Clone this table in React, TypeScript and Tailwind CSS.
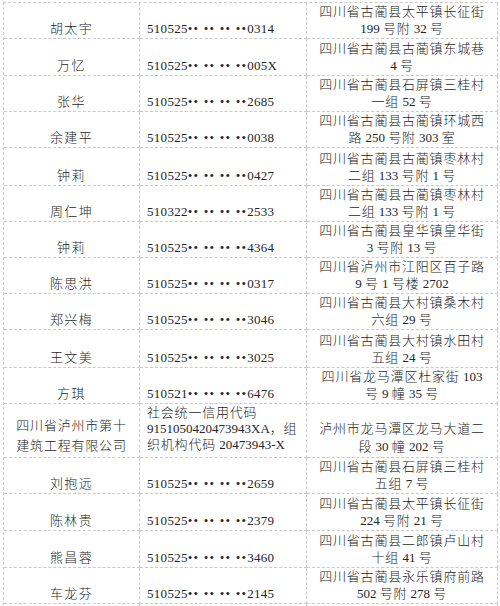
import React from 'react';

type Row = { h: number; name: string; pre: string; tail: string; addr: [string, string] };

const rows: Row[] = [
  { h: 36, name: '胡太宇', pre: '510525', tail: '0314', addr: ['四川省古蔺县太平镇长征街', '199 号附 32 号'] },
  { h: 37, name: '万忆', pre: '510525', tail: '005X', addr: ['四川省古蔺县古蔺镇东城巷', '4 号'] },
  { h: 36, name: '张华', pre: '510525', tail: '2685', addr: ['四川省古蔺县石屏镇三桂村', '一组 52 号'] },
  { h: 36, name: '余建平', pre: '510525', tail: '0038', addr: ['四川省古蔺县古蔺镇环城西', '路 250 号附 303 室'] },
  { h: 38, name: '钟莉', pre: '510525', tail: '0427', addr: ['四川省古蔺县古蔺镇枣林村', '二组 133 号附 1 号'] },
  { h: 35, name: '周仁坤', pre: '510322', tail: '2533', addr: ['四川省古蔺县古蔺镇枣林村', '二组 133 号附 1 号'] },
  { h: 37, name: '钟莉', pre: '510525', tail: '4364', addr: ['四川省古蔺县皇华镇皇华街', '3 号附 13 号'] },
  { h: 36, name: '陈思洪', pre: '510525', tail: '0317', addr: ['四川省泸州市江阳区百子路', '9 号 1 号楼 2702'] },
  { h: 36, name: '郑兴梅', pre: '510525', tail: '3046', addr: ['四川省古蔺县大村镇桑木村', '六组 29 号'] },
  { h: 38, name: '王文美', pre: '510525', tail: '3025', addr: ['四川省古蔺县大村镇水田村', '五组 24 号'] },
  { h: 35, name: '方琪', pre: '510521', tail: '6476', addr: ['四川省龙马潭区杜家街 103', '号 9 幢 35 号'] },
];

const rows2: Row[] = [
  { h: 36, name: '刘抱远', pre: '510525', tail: '2659', addr: ['四川省古蔺县石屏镇三桂村', '五组 7 号'] },
  { h: 37, name: '陈林贵', pre: '510525', tail: '2379', addr: ['四川省古蔺县太平镇长征街', '224 号附 21 号'] },
  { h: 37, name: '熊昌蓉', pre: '510525', tail: '3460', addr: ['四川省古蔺县二郎镇卢山村', '十组 41 号'] },
  { h: 36, name: '车龙芬', pre: '510525', tail: '2145', addr: ['四川省古蔺县永乐镇府前路', '502 号附 278 号'] },
];

// put letter spacing on the chinese runs only, digits stay tight
function T({ s }: { s: string }) {
  const parts = s.split(/([\u4e00-\u9fff，]+)/);
  return (
    <>
      {parts.map((p, i) =>
        /[\u4e00-\u9fff，]/.test(p) ? (
          <span key={i} className="tracking-[0.8px]">{p}</span>
        ) : (
          <span key={i}>{p}</span>
        )
      )}
    </>
  );
}

const cell = 'border-r border-b border-dashed border-[#cacaca]';

function IdText({ pre, tail }: { pre: string; tail: string }) {
  return (
    <span className="tracking-[0.3px]">
      {pre}
      <span className="tracking-[1.2px]">•• •• •• ••</span>
      {tail}
    </span>
  );
}

function PersonRow({ r }: { r: Row }) {
  return (
    <div className="grid grid-cols-[136px_167px_191px]" style={{ height: r.h }}>
      <div className={`${cell} flex items-end justify-center pb-[1px]`}>
        <span className="tracking-[1.4px]">{r.name}</span>
      </div>
      <div className={`${cell} flex items-end pl-[7px] pb-[1px]`}>
        <IdText pre={r.pre} tail={r.tail} />
      </div>
      <div className={`${cell} flex flex-col items-center justify-end pb-[1px]`}>
        <div><T s={r.addr[0]} /></div>
        <div><T s={r.addr[1]} /></div>
      </div>
    </div>
  );
}

export default function App() {
  return (
    <div
      className="w-[500px] h-[606px] overflow-hidden bg-white pl-[3px] pt-[2px] text-[13px] font-light leading-[17px] text-[#262626]"
      style={{ fontFamily: "'Liberation Serif', 'Noto Sans CJK SC', serif" }}
    >
      <div className="w-[495px] border-l border-t border-dashed border-[#cacaca]">
        {rows.map((r, i) => (
          <PersonRow key={i} r={r} />
        ))}

        {/* company row */}
        <div className="grid grid-cols-[136px_167px_191px] h-[55px]">
          <div className={`${cell} flex flex-col items-center justify-end pb-[1px] leading-[20px] tracking-[0.8px]`}>
            <div>四川省泸州市第十</div>
            <div>建筑工程有限公司</div>
          </div>
          <div className={`${cell} flex flex-col justify-end pl-[7px] pb-[4px] leading-[16px]`}>
            <div><T s="社会统一信用代码" /></div>
            <div><T s="9151050420473943XA，组" /></div>
            <div><T s="织机构代码 20473943-X" /></div>
          </div>
          <div className={`${cell} flex flex-col items-center justify-end pb-[1px] leading-[18px]`}>
            <div><T s="泸州市龙马潭区龙马大道二" /></div>
            <div><T s="段 30 幢 202 号" /></div>
          </div>
        </div>

        {rows2.map((r, i) => (
          <PersonRow key={i} r={r} />
        ))}

        {/* next row starts just at the bottom edge */}
        <div className="grid grid-cols-[136px_167px_191px] h-[36px]">
          <div className={cell} />
          <div className={cell} />
          <div className={cell} />
        </div>
      </div>
    </div>
  );
}
